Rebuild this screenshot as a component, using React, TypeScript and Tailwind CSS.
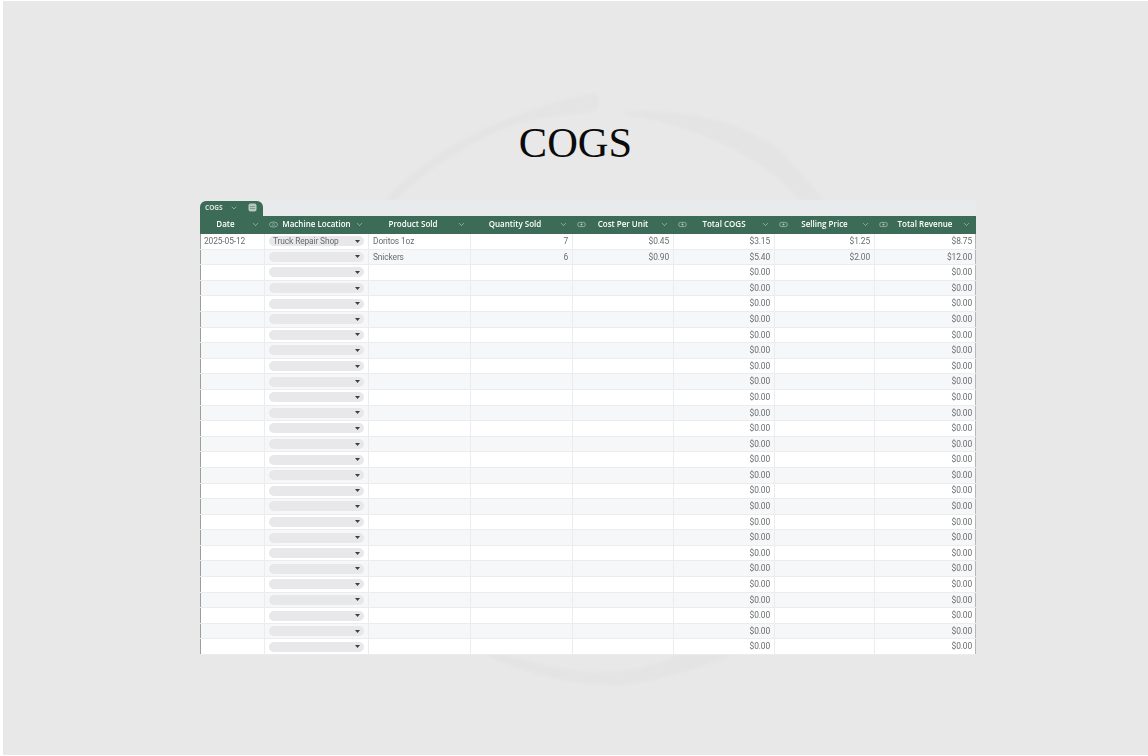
import React from 'react';
import { ChevronDown } from 'lucide-react';

interface Column {
  label: string;
  icon?: 'eye' | 'link';
}

const columns: Column[] = [
  { label: 'Date' },
  { label: 'Machine Location', icon: 'eye' },
  { label: 'Product Sold' },
  { label: 'Quantity Sold' },
  { label: 'Cost Per Unit', icon: 'link' },
  { label: 'Total COGS', icon: 'link' },
  { label: 'Selling Price', icon: 'link' },
  { label: 'Total Revenue', icon: 'link' },
];

const gridCols = 'grid grid-cols-[65px_104px_102px_102px_101px_101px_100px_101px]';

const rows = Array.from({ length: 27 }, (_, i) => {
  if (i === 0) return { date: '2025-05-12', location: 'Truck Repair Shop', product: 'Doritos 1oz', qty: '7', cost: '$0.45', cogs: '$3.15', price: '$1.25', revenue: '$8.75' };
  if (i === 1) return { date: '', location: '', product: 'Snickers', qty: '6', cost: '$0.90', cogs: '$5.40', price: '$2.00', revenue: '$12.00' };
  return { date: '', location: '', product: '', qty: '', cost: '', cogs: '$0.00', price: '', revenue: '$0.00' };
});

const HeaderIcon = ({ type }: { type: 'eye' | 'link' }) => (
  <svg width="9" height="7" viewBox="0 0 9 7" fill="none" className="shrink-0">
    {type === 'eye' ? (
      <>
        <ellipse cx="4.5" cy="3.5" rx="4" ry="2.6" stroke="#b4c8be" strokeWidth="0.7" />
        <circle cx="4.5" cy="3.5" r="1.1" stroke="#b4c8be" strokeWidth="0.5" />
      </>
    ) : (
      <>
        <rect x="0.8" y="1.4" width="7.4" height="4.2" rx="1.6" stroke="#b4c8be" strokeWidth="0.7" />
        <circle cx="4.5" cy="3.5" r="1" fill="#b4c8be" />
      </>
    )}
  </svg>
);

const Cell = ({ right, children }: { right?: boolean; children?: React.ReactNode }) => (
  <div className={`flex items-center min-w-0 px-[4px] border-r border-[#ebecee] last:border-r-0 ${right ? 'justify-end' : ''}`}>
    {children}
  </div>
);

export default function App() {
  return (
    <div className="relative w-[1148px] h-[756px] overflow-hidden bg-white pl-[3px] pt-px pb-px">
      <div className="relative w-full h-full bg-[#e8e8e8]">
        <svg className="absolute left-[-3px] top-[-1px] blur-[1.2px]" width="1148" height="756" viewBox="0 0 1148 756" fill="#e4e4e4">
          <path d="M385 200C420 160 490 115 590 94C600 93 600 100 597 108C590 118 560 108 500 130C460 148 420 175 397 200Z" />
          <path d="M620 113C680 106 750 122 785 155C800 172 815 190 823 200L800 200C770 165 715 130 620 113Z" />
          <path d="M485 654C520 672 570 686 625 685C660 680 700 668 735 654L680 654C650 670 600 678 560 668C530 662 510 656 500 654Z" />
        </svg>

        <div className="relative flex justify-center pt-[117px] h-[199px]">
          <h1 className="font-['Liberation_Serif',serif] text-[42.5px] leading-[50px] text-[#0b0b0b]">COGS</h1>
        </div>

        <div className="relative ml-[197px] w-[776px] blur-[0.4px] font-['Open_Sans',sans-serif]">
          <div className="h-[16px] pt-px bg-[#e9eaeb]">
            <div className="flex items-center h-[15px] w-[63px] pl-[5px] pb-[2px] rounded-t-[6px] bg-[#3c6b57] text-[#d5e0da] text-[6.5px] font-bold">
              <span>COGS</span>
              <ChevronDown size={8} strokeWidth={1.6} className="ml-[7px]" />
              <svg width="9" height="9" viewBox="0 0 9 9" className="ml-[10px]">
                <rect x="0.5" y="0.5" width="8" height="8" rx="2" fill="#b8c8bf" />
                <rect x="2" y="3" width="5" height="1" fill="#7f9c8e" />
                <rect x="2" y="5" width="5" height="1" fill="#7f9c8e" />
              </svg>
            </div>
          </div>

          <div className={`${gridCols} h-[18px] pb-[2px] bg-[#3c6b57] text-white text-[8px] font-semibold`}>
            {columns.map(col => (
              <div key={col.label} className={`flex items-center pr-[5px] whitespace-nowrap ${col.icon ? 'pl-[4px]' : ''}`}>
                {col.icon && <HeaderIcon type={col.icon} />}
                <span className="flex-1 text-center">{col.label}</span>
                <ChevronDown size={9} strokeWidth={1.6} className="shrink-0 text-[#c9d8d0]" />
              </div>
            ))}
          </div>

          <div className="font-['Roboto',sans-serif] text-[8.4px] tracking-[-0.12px] text-[#696c6e]">
            {rows.map((row, i) => (
              <div
                key={i}
                className={`${gridCols} h-[15.6px] border-b border-[#ebecee] shadow-[inset_1px_0_0_#9a9e9c,inset_-1px_0_0_#b5b8b6] ${i % 2 === 0 ? 'bg-white' : 'bg-[#f6f7f9]'}`}
              >
                <Cell>{row.date}</Cell>
                <Cell>
                  <div className="flex items-center justify-between w-full h-[10px] px-[4px] rounded-full bg-[#e8e8ea] whitespace-nowrap">
                    <span>{row.location}</span>
                    <svg width="5" height="3" viewBox="0 0 5 3" className="shrink-0">
                      <polygon points="0,0 5,0 2.5,3" fill="#3d3f42" />
                    </svg>
                  </div>
                </Cell>
                <Cell>{row.product}</Cell>
                <Cell right>{row.qty}</Cell>
                <Cell right>{row.cost}</Cell>
                <Cell right>{row.cogs}</Cell>
                <Cell right>{row.price}</Cell>
                <Cell right>{row.revenue}</Cell>
              </div>
            ))}
          </div>
        </div>
      </div>
    </div>
  );
}
